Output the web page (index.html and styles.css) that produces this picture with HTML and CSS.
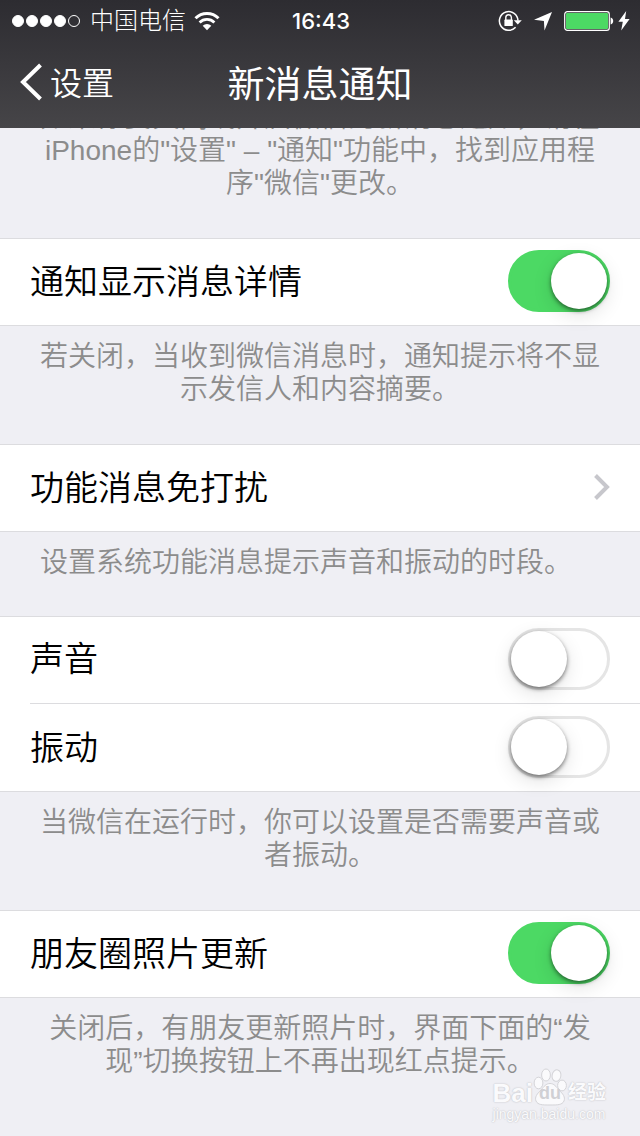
FILE: index.html
```html
<!DOCTYPE html>
<html lang="zh-CN">
<head>
  <meta charset="UTF-8">
  <meta name="viewport" content="width=device-width, initial-scale=1.0">
  <title>新消息通知</title>
  <link rel="stylesheet" href="styles.css">
</head>
<body>

<header class="header">
  <div class="status-bar">
    <div class="status-left">
      <div class="signal">
        <span class="dot"></span>
        <span class="dot"></span>
        <span class="dot"></span>
        <span class="dot"></span>
        <span class="dot empty"></span>
      </div>
      <span class="carrier">中国电信</span>
      <svg class="wifi" width="26" height="20" viewBox="0 0 26 20" fill="none" stroke="#fff">
        <path d="M1.5 7.2a16.3 16.3 0 0 1 23 0" stroke-width="3"/>
        <path d="M5.6 11.4a10.5 10.5 0 0 1 14.8 0" stroke-width="2.8"/>
        <path d="M13 19.2l-4.3-4.4a6.2 6.2 0 0 1 8.6 0z" fill="#fff" stroke="none"/>
      </svg>
    </div>
    <span class="time">16:43</span>
    <div class="status-right">
      <svg width="24" height="22" viewBox="0 0 24 22" fill="none" stroke="#fff">
        <path d="M17.6 17.2a9.3 9.3 0 1 1 2.4-6.6" stroke-width="1.5"/>
        <path d="M15.8 10.2h8l-4 4.4z" fill="#fff" stroke="none"/>
        <path d="M7.8 10V7.6a2.8 2.8 0 0 1 5.6 0V10" stroke-width="1.4"/>
        <rect x="6.4" y="9.6" width="8.4" height="6.4" rx="0.6" fill="#fff" stroke="none"/>
      </svg>
      <svg width="20" height="20" viewBox="0 0 20 20" fill="#fff">
        <path d="M19 1L11.5 19.5l-.6-9.6L1 8.8z"/>
      </svg>
      <svg width="50" height="20" viewBox="0 0 50 20">
        <rect x="0.7" y="0.7" width="44.6" height="18.6" rx="2.6" fill="none" stroke="#fff" stroke-width="1.2"/>
        <rect x="2" y="2" width="42" height="16" rx="1" fill="#4cd964"/>
        <path d="M46.6 6.6c1.6.4 2.6 1.6 2.6 3.4s-1 3-2.6 3.4z" fill="#fff"/>
      </svg>
      <svg width="12" height="20" viewBox="0 0 12 20" fill="#fff">
        <path d="M8.2 0L.4 10.8h4.4L3.2 19.6 11.6 8H7z"/>
      </svg>
    </div>
  </div>
  <nav class="nav-bar">
    <a class="back" href="#">
      <svg width="22" height="38" viewBox="0 0 22 38" fill="none" stroke="#fff" stroke-width="4">
        <path d="M20.5 2L3 19l17.5 17"/>
      </svg>
      <span>设置</span>
    </a>
    <h1 class="title">新消息通知</h1>
  </nav>
</header>

<main class="settings">
  <p class="note">如果你要关闭或开启微信的新消息通知，请在iPhone的"设置" – "通知"功能中，找到应用程序"微信"更改。</p>

  <section class="group">
    <label class="row">
      <span>通知显示消息详情</span>
      <input class="switch" type="checkbox" checked>
    </label>
  </section>
  <p class="note">若关闭，当收到微信消息时，通知提示将不显示发信人和内容摘要。</p>

  <section class="group">
    <a class="row" href="#">
      <span>功能消息免打扰</span>
      <svg width="16" height="26" viewBox="0 0 16 26" fill="none" stroke="#c7c7cc" stroke-width="4">
        <path d="M1.5 1.5L13 13 1.5 24.5"/>
      </svg>
    </a>
  </section>
  <p class="note note-left">设置系统功能消息提示声音和振动的时段。</p>

  <section class="group">
    <label class="row">
      <span>声音</span>
      <input class="switch" type="checkbox">
    </label>
    <label class="row">
      <span>振动</span>
      <input class="switch" type="checkbox">
    </label>
  </section>
  <p class="note">当微信在运行时，你可以设置是否需要声音或者振动。</p>

  <section class="group">
    <label class="row">
      <span>朋友圈照片更新</span>
      <input class="switch" type="checkbox" checked>
    </label>
  </section>
  <p class="note">关闭后，有朋友更新照片时，界面下面的“发现”切换按钮上不再出现红点提示。</p>
</main>

<div class="watermark">
  <div class="brand">
    <span>Bai</span>
    <span class="paw">
      <svg width="34" height="38" viewBox="0 0 34 38" fill="#fafafc" stroke="#d4d4d8">
        <ellipse cx="5.5" cy="15" rx="4.4" ry="5.8"/>
        <ellipse cx="13" cy="7" rx="4.4" ry="6"/>
        <ellipse cx="23.5" cy="7.6" rx="4.4" ry="5.8" transform="rotate(12 23.5 7.6)"/>
        <ellipse cx="29" cy="17.5" rx="4.4" ry="5.4"/>
        <path d="M17 15.5c4 0 6 3 9 6.5 4 4 6.5 7 5 11-2 4-6 4-14 4s-12 0-14-4c-1.5-4 1-7 5-11 3-3.5 5-6.5 9-6.5z"/>
      </svg>
      <span class="du">du</span>
    </span>
    <span class="jingyan">经验</span>
  </div>
  <span class="site">jingyan.baidu.com</span>
</div>

</body>
</html>
```

FILE: styles.css
```css
* {
  margin: 0;
  padding: 0;
  box-sizing: border-box;
}

body {
  font-family: "Liberation Sans", "Noto Sans CJK SC", sans-serif;
  font-weight: 350;
  min-height: 100vh;
  position: relative;
  background-color: #efeff4;
  color: #000;
}

svg {
  display: block;
  flex: none;
}

a {
  color: inherit;
  text-decoration: none;
}

/* Header stays over the scrolled list */
.header {
  position: fixed;
  top: 0;
  left: 0;
  width: 100%;
  height: 128px;
  z-index: 10;
  color: #fff;
  background: linear-gradient(#2d2c31, #464548);
}

.status-bar {
  display: grid;
  grid-template-columns: 1fr auto 1fr;
  align-items: center;
  height: 40px;
  padding: 1px 10px 0 12px;
}

.status-left {
  display: flex;
  align-items: center;
}

.signal {
  display: flex;
  gap: 2px;
  margin-right: 10px;
}

.dot {
  width: 12px;
  height: 12px;
  border: 1px solid #fff;
  border-radius: 50%;
  background-color: #fff;
}

.dot.empty {
  background-color: transparent;
}

.carrier {
  font-size: 24px;
  font-weight: 300;
  line-height: 40px;
}

.wifi {
  margin-left: 8px;
}

.time {
  font-size: 22px;
  font-weight: 500;
  font-family: Inter, "Liberation Sans", sans-serif;
}

.status-right {
  display: flex;
  align-items: center;
  justify-content: flex-end;
  gap: 11px;
}

.status-right svg:last-child {
  margin-left: -7px;
}

.nav-bar {
  display: grid;
  grid-template-columns: 1fr auto 1fr;
  align-items: center;
  height: 88px;
  padding: 0 20px 4px;
}

.back {
  display: flex;
  align-items: center;
  gap: 8px;
  font-size: 32px;
}

.back span {
  padding-bottom: 2px;
}

.title {
  font-size: 37px;
  font-weight: 400;
}

.settings {
  padding-top: 87px;
}

.note {
  padding: 14px 40px 38px;
  font-size: 28px;
  line-height: 33px;
  color: #8c8c8c;
  text-align: center;
}

.note-left {
  padding-bottom: 37px;
  text-align: left;
}

.group {
  padding-left: 30px;
  background-color: #fff;
  box-shadow: inset 0 1px #dcdcdf, inset 0 -1px #dcdcdf;
}

.row {
  display: flex;
  align-items: center;
  justify-content: space-between;
  height: 88px;
  padding: 0 30px 2px 0;
  font-size: 34px;
}

.row span {
  padding-bottom: 4px;
}

.row:not(:last-child) {
  border-bottom: 1px solid #dcdcdf;
}

.switch {
  appearance: none;
  display: flex;
  width: 102px;
  height: 62px;
  padding: 0;
  border: 3px solid #e5e5e5;
  border-radius: 31px;
  background-color: #fff;
}

.switch::before {
  content: "";
  width: 56px;
  height: 56px;
  border-radius: 50%;
  background-color: #fff;
  box-shadow: 0 2px 4px rgba(0, 0, 0, 0.5), 0 6px 20px rgba(0, 0, 0, 0.12);
}

.switch:checked {
  justify-content: flex-end;
  border-color: #4cd964;
  background-color: #4cd964;
}

.watermark {
  position: absolute;
  right: 34px;
  bottom: 14px;
  color: #fafafc;
  font-weight: 700;
  text-shadow: 0 0 1px #c8c8cc, 0 0 2px #c8c8cc;
}

.brand {
  display: flex;
  align-items: flex-end;
  height: 38px;
  font-size: 26px;
  line-height: 26px;
}

.paw {
  position: relative;
}

.du {
  position: absolute;
  left: 0;
  bottom: 4px;
  width: 100%;
  font-size: 18px;
  line-height: 18px;
  text-align: center;
  color: #d0d0d4;
  text-shadow: none;
}

.jingyan {
  margin-left: 1px;
  font-size: 19px;
}

.site {
  display: block;
  font-size: 14px;
  line-height: 16px;
  font-weight: 400;
}
```
